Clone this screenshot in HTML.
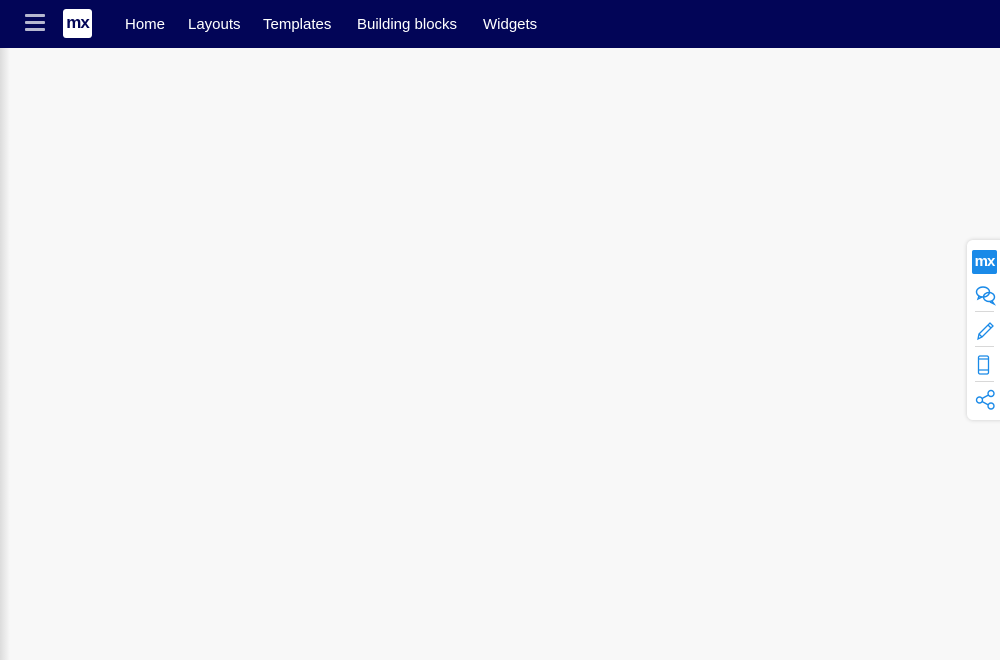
<!DOCTYPE html>
<html><head><meta charset="utf-8"><style>
*{margin:0;padding:0;box-sizing:border-box}
html,body{width:1000px;height:660px;overflow:hidden;background:#f8f8f8;font-family:"Liberation Sans",sans-serif}
.top{position:absolute;left:0;top:0;width:1000px;height:48px;background:#020557}
.shadow{position:absolute;left:0;top:48px;width:10px;height:612px;background:linear-gradient(to right,#dcdcdc,#f8f8f8)}
.burger{position:absolute;left:25px;top:14px;width:20px}
.burger i{display:block;height:3px;background:#b6b8d0;margin-bottom:4px;border-radius:1px}
.logo{position:absolute;left:63px;top:9px;width:29px;height:29px;background:#fff;border-radius:3px;color:#020557;font-weight:bold;font-size:17px;text-align:center;line-height:28px;letter-spacing:-1px}
.nav a{position:absolute;top:16px;color:#fff;font-size:15px;text-decoration:none}
.side{position:absolute;left:967px;top:240px;width:40px;height:180px;background:#fff;border-radius:6px;box-shadow:0 0 4px rgba(0,0,0,.18)}
.mx{position:absolute;left:5px;top:10px;width:25px;height:24px;background:#1a8ae8;border-radius:2px;color:#fff;font-weight:bold;font-size:15px;text-align:center;line-height:24px;letter-spacing:-1px}
.hr{position:absolute;left:8px;width:19px;height:1px;background:#d8d8d8}
svg{position:absolute}
</style></head><body>
<div class="top">
<div class="burger"><i></i><i></i><i></i></div>
<div class="logo">mx</div>
<div class="nav">
<a style="left:125px">Home</a><a style="left:188px">Layouts</a><a style="left:263px">Templates</a><a style="left:357px">Building blocks</a><a style="left:483px">Widgets</a>
</div></div>
<div class="shadow"></div>
<div class="side">
<div class="mx">mx</div>
<svg style="left:8px;top:44px" width="22" height="22" viewBox="0 0 22 22" fill="none" stroke="#1a8ae8" stroke-width="1.4"><ellipse cx="8" cy="8" rx="6.5" ry="5"/><path d="M4 12l-1 3 4-2"/><ellipse cx="14" cy="13" rx="5.5" ry="4.5"/><path d="M17 17l2 3-4-2"/></svg>
<div class="hr" style="top:71px"></div>
<svg style="left:8px;top:79px" width="20" height="22" viewBox="0 0 20 22" fill="none" stroke="#1a8ae8" stroke-width="1.3"><path d="M3 20l1-5L15 4l3 3L7 18z M13 6l3 3 M4 15l3 3"/></svg>
<div class="hr" style="top:106px"></div>
<svg style="left:10px;top:115px" width="14" height="20" viewBox="0 0 14 20" fill="none" stroke="#1a8ae8" stroke-width="1.3"><rect x="1.5" y="1" width="10" height="18" rx="1.5"/><path d="M1.5 4h10M1.5 15h10"/></svg>
<div class="hr" style="top:141px"></div>
<svg style="left:8px;top:149px" width="22" height="22" viewBox="0 0 22 22" fill="none" stroke="#1a8ae8" stroke-width="1.4"><circle cx="4.5" cy="11" r="3"/><circle cx="16" cy="4.5" r="3"/><circle cx="16" cy="17" r="3"/><path d="M7 9.5l6.5-3.5M7 12.5l6.5 3.5"/></svg>
</div>
</body></html>
